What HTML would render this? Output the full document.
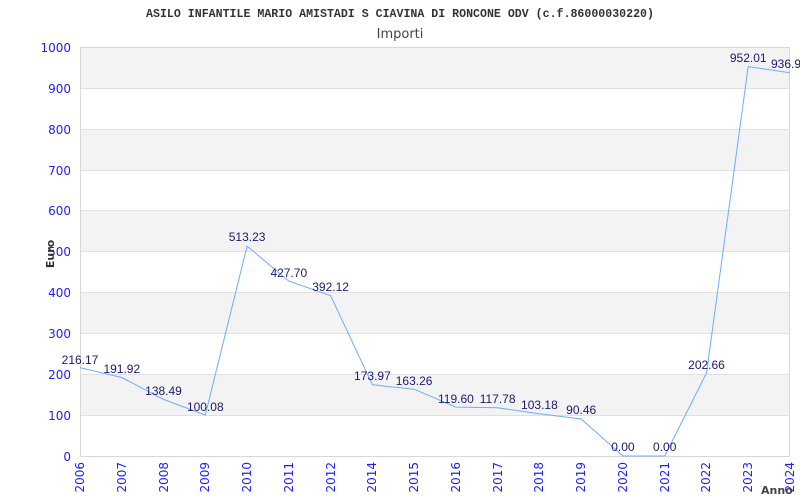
<!DOCTYPE html>
<html><head><style>body{margin:0;background:#fff}svg{display:block}</style></head><body>
<svg width="800" height="500" xmlns="http://www.w3.org/2000/svg">
<rect width="800" height="500" fill="#fff"/>
<g fill="#f3f3f3">
<rect x="80" y="47" width="710" height="41"/>
<rect x="80" y="129" width="710" height="41"/>
<rect x="80" y="211" width="710" height="40"/>
<rect x="80" y="292" width="710" height="41"/>
<rect x="80" y="374" width="710" height="41"/>
</g>
<g stroke="#e0e0e0" stroke-width="1">
<line x1="80" y1="88.5" x2="790" y2="88.5"/><line x1="80" y1="129.5" x2="790" y2="129.5"/>
<line x1="80" y1="170.5" x2="790" y2="170.5"/><line x1="80" y1="210.5" x2="790" y2="210.5"/>
<line x1="80" y1="251.5" x2="790" y2="251.5"/><line x1="80" y1="292.5" x2="790" y2="292.5"/>
<line x1="80" y1="333.5" x2="790" y2="333.5"/><line x1="80" y1="374.5" x2="790" y2="374.5"/>
<line x1="80" y1="415.5" x2="790" y2="415.5"/>
</g>
<rect x="80.5" y="47.5" width="709" height="409" fill="none" stroke="#d8d8d8"/>
<text x="400" y="17" text-anchor="middle" font-family="Liberation Mono,monospace" font-weight="bold" font-size="11.6" fill="#333">ASILO INFANTILE MARIO AMISTADI S CIAVINA DI RONCONE ODV (c.f.86000030220)</text>
<text x="400" y="38" text-anchor="middle" font-family="DejaVu Sans,sans-serif" font-size="13" fill="#444">Importi</text>
<g font-family="DejaVu Sans,sans-serif" font-size="12" fill="#2020ff" text-anchor="end">
<text x="71" y="52">1000</text><text x="71" y="93">900</text><text x="71" y="134">800</text>
<text x="71" y="175">700</text><text x="71" y="215">600</text><text x="71" y="256">500</text>
<text x="71" y="297">400</text><text x="71" y="338">300</text><text x="71" y="379">200</text>
<text x="71" y="420">100</text><text x="71" y="461">0</text>
</g>
<text transform="translate(54,254) rotate(-90)" text-anchor="middle" font-family="DejaVu Sans,sans-serif" font-weight="bold" font-size="11" fill="#333">Euro</text>
<text x="761" y="494" font-family="DejaVu Sans,sans-serif" font-weight="bold" font-size="11" fill="#444">Anno</text>
<g font-family="DejaVu Sans,sans-serif" font-size="12" fill="#2020ff" text-anchor="end">
<text transform="translate(84,462) rotate(-90)">2006</text>
<text transform="translate(126,462) rotate(-90)">2007</text>
<text transform="translate(168,462) rotate(-90)">2008</text>
<text transform="translate(209,462) rotate(-90)">2009</text>
<text transform="translate(251,462) rotate(-90)">2010</text>
<text transform="translate(293,462) rotate(-90)">2011</text>
<text transform="translate(335,462) rotate(-90)">2012</text>
<text transform="translate(376,462) rotate(-90)">2014</text>
<text transform="translate(418,462) rotate(-90)">2015</text>
<text transform="translate(460,462) rotate(-90)">2016</text>
<text transform="translate(502,462) rotate(-90)">2017</text>
<text transform="translate(543,462) rotate(-90)">2018</text>
<text transform="translate(585,462) rotate(-90)">2019</text>
<text transform="translate(627,462) rotate(-90)">2020</text>
<text transform="translate(669,462) rotate(-90)">2021</text>
<text transform="translate(710,462) rotate(-90)">2022</text>
<text transform="translate(752,462) rotate(-90)">2023</text>
<text transform="translate(794,462) rotate(-90)">2024</text>
</g>
<polyline fill="none" stroke="#6aaeff" stroke-width="1" points="80,367.6 121.8,377.5 163.5,399.4 205.3,415.1 247.1,246.1 288.8,281.1 330.6,295.6 372.4,384.8 414.1,389.2 455.9,407.1 497.6,407.8 539.4,413.8 581.2,419 622.9,456 664.7,456 706.5,373.1 748.2,66.6 790,72.8"/>
<g font-family="Liberation Sans,sans-serif" font-size="12" fill="#1a1a70" text-anchor="middle">
<text x="80" y="364">216.17</text><text x="121.8" y="373">191.92</text><text x="163.5" y="395">138.49</text>
<text x="205.3" y="411">100.08</text><text x="247.1" y="241">513.23</text><text x="288.8" y="277">427.70</text>
<text x="330.6" y="291">392.12</text><text x="372.4" y="380">173.97</text><text x="414.1" y="385">163.26</text>
<text x="455.9" y="403">119.60</text><text x="497.6" y="403">117.78</text><text x="539.4" y="409">103.18</text>
<text x="581.2" y="414">90.46</text><text x="622.9" y="451">0.00</text><text x="664.7" y="451">0.00</text>
<text x="706.5" y="369">202.66</text><text x="748.2" y="62">952.01</text><text x="786" y="68">936.9</text>
</g>
</svg>
</body></html>
